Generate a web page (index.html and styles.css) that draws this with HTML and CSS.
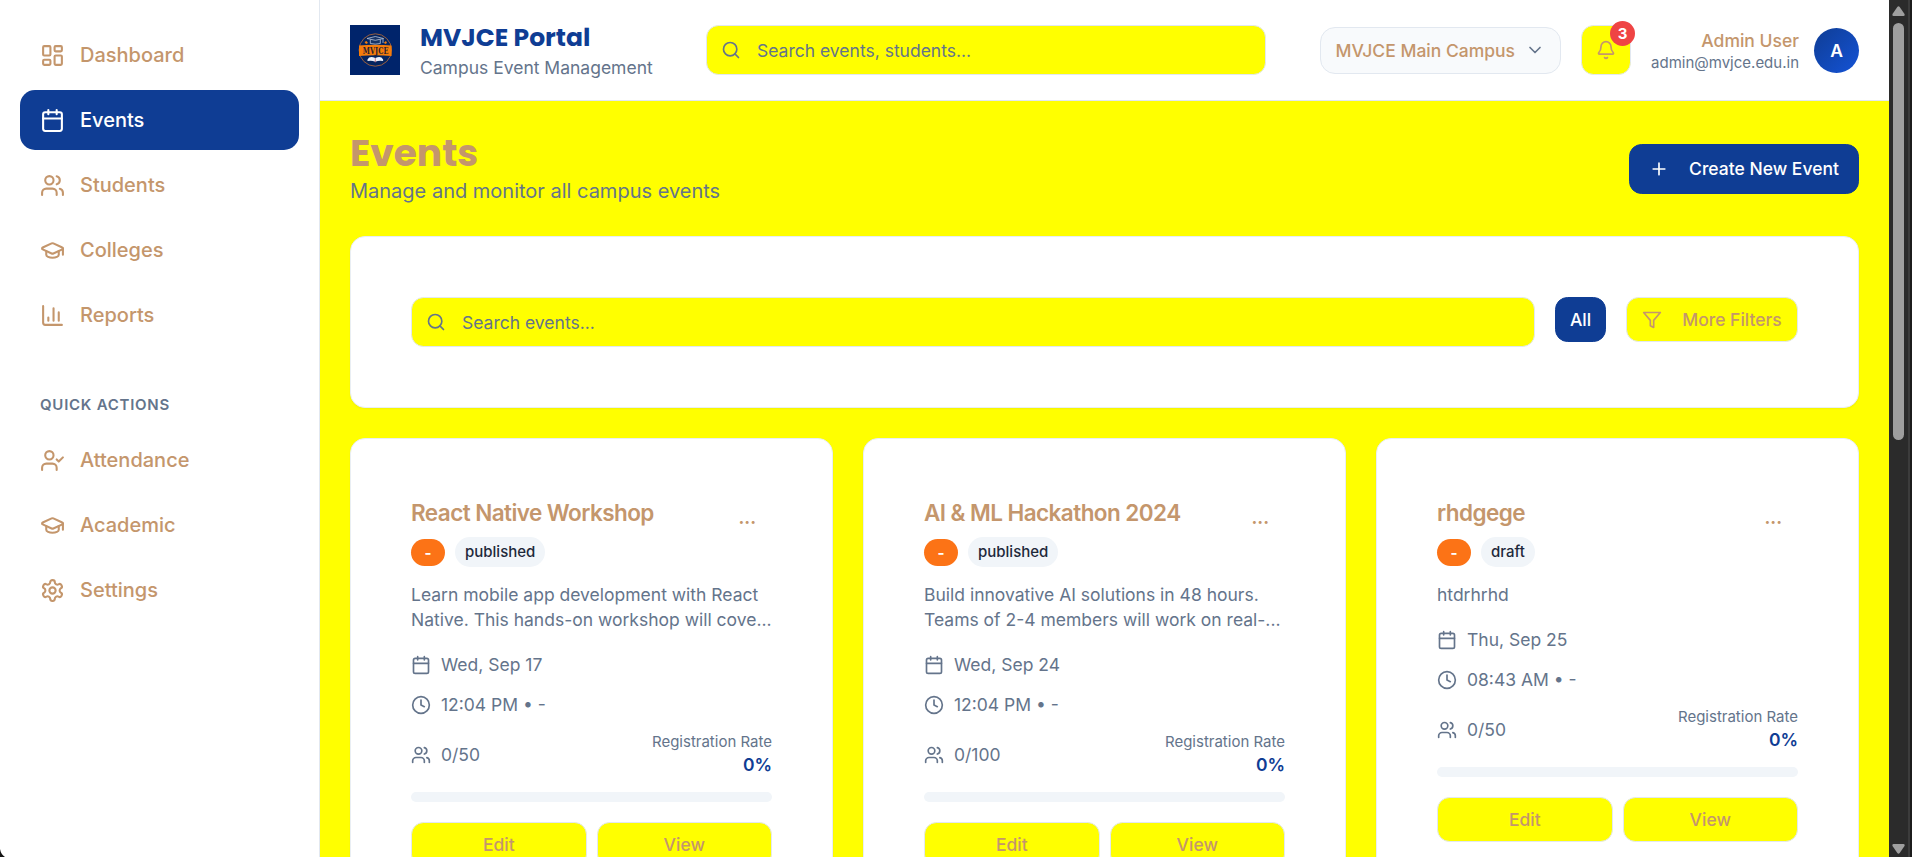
FILE: index.html
```html
<!DOCTYPE html>
<html lang="en">
<head>
<meta charset="utf-8">
<title>MVJCE Portal</title>
<link rel="stylesheet" href="styles.css">
</head>
<body>
<svg class="sprite" aria-hidden="true">
  <symbol id="dashboard" viewBox="0 0 24 24"><rect width="7" height="9" x="3" y="3" rx="1"/><rect width="7" height="5" x="14" y="3" rx="1"/><rect width="7" height="9" x="14" y="12" rx="1"/><rect width="7" height="5" x="3" y="16" rx="1"/></symbol>
  <symbol id="calendar" viewBox="0 0 24 24"><path d="M8 2v4M16 2v4"/><rect width="18" height="18" x="3" y="4" rx="2"/><path d="M3 10h18"/></symbol>
  <symbol id="users" viewBox="0 0 24 24"><path d="M16 21v-2a4 4 0 0 0-4-4H6a4 4 0 0 0-4 4v2"/><circle cx="9" cy="7" r="4"/><path d="M22 21v-2a4 4 0 0 0-3-3.87M16 3.13a4 4 0 0 1 0 7.75"/></symbol>
  <symbol id="cap" viewBox="0 0 24 24"><path d="M21.42 10.922a1 1 0 0 0-.019-1.838L12.83 5.18a2 2 0 0 0-1.66 0L2.6 9.08a1 1 0 0 0 0 1.832l8.57 3.908a2 2 0 0 0 1.66 0z"/><path d="M22 10v6M6 12.5V16a6 3 0 0 0 12 0v-3.5"/></symbol>
  <symbol id="chart" viewBox="0 0 24 24"><path d="M3 3v16a2 2 0 0 0 2 2h16M18 17V9M13 17V5M8 17v-3"/></symbol>
  <symbol id="user-check" viewBox="0 0 24 24"><path d="m16 11 2 2 4-4M16 21v-2a4 4 0 0 0-4-4H6a4 4 0 0 0-4 4v2"/><circle cx="9" cy="7" r="4"/></symbol>
  <symbol id="settings" viewBox="0 0 24 24"><path d="M12.22 2h-.44a2 2 0 0 0-2 2v.18a2 2 0 0 1-1 1.73l-.43.25a2 2 0 0 1-2 0l-.15-.08a2 2 0 0 0-2.73.73l-.22.38a2 2 0 0 0 .73 2.73l.15.1a2 2 0 0 1 1 1.72v.51a2 2 0 0 1-1 1.74l-.15.09a2 2 0 0 0-.73 2.73l.22.38a2 2 0 0 0 2.73.73l.15-.08a2 2 0 0 1 2 0l.43.25a2 2 0 0 1 1 1.73V20a2 2 0 0 0 2 2h.44a2 2 0 0 0 2-2v-.18a2 2 0 0 1 1-1.73l.43-.25a2 2 0 0 1 2 0l.15.08a2 2 0 0 0 2.73-.73l.22-.39a2 2 0 0 0-.73-2.73l-.15-.08a2 2 0 0 1-1-1.74v-.5a2 2 0 0 1 1-1.74l.15-.09a2 2 0 0 0 .73-2.73l-.22-.38a2 2 0 0 0-2.73-.73l-.15.08a2 2 0 0 1-2 0l-.43-.25a2 2 0 0 1-1-1.73V4a2 2 0 0 0-2-2z"/><circle cx="12" cy="12" r="3"/></symbol>
  <symbol id="search" viewBox="0 0 24 24"><circle cx="11" cy="11" r="8"/><path d="m21 21-4.3-4.3"/></symbol>
  <symbol id="chevron" viewBox="0 0 24 24"><path d="m6 9 6 6 6-6"/></symbol>
  <symbol id="bell" viewBox="0 0 24 24"><path d="M10.268 21a2 2 0 0 0 3.464 0M3.262 15.326A1 1 0 0 0 4 17h16a1 1 0 0 0 .74-1.673C19.41 13.956 18 12.499 18 8A6 6 0 0 0 6 8c0 4.499-1.411 5.956-2.738 7.326"/></symbol>
  <symbol id="plus" viewBox="0 0 24 24"><path d="M5 12h14M12 5v14"/></symbol>
  <symbol id="filter" viewBox="0 0 24 24"><path d="M22 3H2l8 9.46V19l4 2v-8.54z"/></symbol>
  <symbol id="clock" viewBox="0 0 24 24"><circle cx="12" cy="12" r="10"/><path d="M12 6v6l4 2"/></symbol>
</svg>

<div class="app">
  <aside class="sidebar">
    <nav class="nav">
      <a class="nav-item"><svg class="icon icon-lg"><use href="#dashboard"/></svg>Dashboard</a>
      <a class="nav-item active"><svg class="icon icon-lg"><use href="#calendar"/></svg>Events</a>
      <a class="nav-item"><svg class="icon icon-lg"><use href="#users"/></svg>Students</a>
      <a class="nav-item"><svg class="icon icon-lg"><use href="#cap"/></svg>Colleges</a>
      <a class="nav-item"><svg class="icon icon-lg"><use href="#chart"/></svg>Reports</a>
    </nav>
    <h3 class="nav-heading">QUICK ACTIONS</h3>
    <nav class="nav">
      <a class="nav-item"><svg class="icon icon-lg"><use href="#user-check"/></svg>Attendance</a>
      <a class="nav-item"><svg class="icon icon-lg"><use href="#cap"/></svg>Academic</a>
      <a class="nav-item"><svg class="icon icon-lg"><use href="#settings"/></svg>Settings</a>
    </nav>
    <svg class="window-corner" viewBox="0 0 5 8"><path d="M0 0Q1 5.500 5 8H0z"/></svg>
  </aside>

  <div class="content">
    <header class="header">
      <div class="brand">
        <svg class="logo" viewBox="0 0 50 50">
          <rect width="50" height="50" fill="#00246b"/>
          <circle cx="25.300" cy="25" r="16.200" fill="#04245f" stroke="#a8653c" stroke-width=".9"/>
          <path d="M9 20.500q16.300-1.500 32.600 0V31q-16.300-1.500-32.600 0z" fill="#f57c0b"/>
          <path d="M17 13.500l8.300-2 8.300 2-8.300 1.800zM20.300 14.500v4q5 1.300 10 0v-4M33 14v4" fill="#173468" stroke="#b9c6dc" stroke-width=".8"/>
          <path d="M14.500 17l2-1 1.500 2-2 1zM34 17.500l2-1.500 1 2-2 1z" fill="#f57c0b"/>
          <path d="M17.500 34.500q2-4 7.800-1.500 5.800-2.500 7.800 1.500v1.500q-4-1-7.800.7-3.800-1.700-7.800-.7z" fill="#eef2fa"/>
          <path d="M25.300 33v4.500" stroke="#c44a58" stroke-width=".7"/>
          <text x="25.600" y="28.600" text-anchor="middle" textLength="25.500" lengthAdjust="spacingAndGlyphs" class="logo-text">MVJCE</text>
        </svg>
        <div class="brand-text">
          <h1 class="brand-name">MVJCE Portal</h1>
          <p class="brand-sub">Campus Event Management</p>
        </div>
      </div>
      <div class="field header-search"><svg class="icon"><use href="#search"/></svg><span>Search events, students...</span></div>
      <div class="header-right">
        <div class="campus"><span>MVJCE Main Campus</span><svg class="icon"><use href="#chevron"/></svg></div>
        <button class="btn bell"><svg class="icon"><use href="#bell"/></svg><span class="badge">3</span></button>
        <div class="user">
          <div class="user-text"><p class="user-name">Admin User</p><p class="user-mail">admin@mvjce.edu.in</p></div>
          <div class="avatar">A</div>
        </div>
      </div>
    </header>

    <main class="main">
      <div class="page-head">
        <div>
          <h2 class="page-title">Events</h2>
          <p class="page-sub">Manage and monitor all campus events</p>
        </div>
        <button class="btn primary create"><svg class="icon"><use href="#plus"/></svg>Create New Event</button>
      </div>

      <section class="card filters">
        <div class="field filter-search"><svg class="icon"><use href="#search"/></svg><span>Search events...</span></div>
        <button class="btn primary all">All</button>
        <button class="btn more"><svg class="icon"><use href="#filter"/></svg>More Filters</button>
      </section>

      <section class="grid">
        <article class="card event">
          <div class="event-head"><h3 class="event-title">React Native Workshop</h3><span class="dots">...</span></div>
          <div class="tags"><span class="tag orange">-</span><span class="tag">published</span></div>
          <p class="desc">Learn mobile app development with React<br>Native. This hands-on workshop will cove...</p>
          <div class="meta first"><svg class="icon"><use href="#calendar"/></svg>Wed, Sep 17</div>
          <div class="meta"><svg class="icon"><use href="#clock"/></svg>12:04 PM • -</div>
          <div class="stats"><div class="meta-inline"><svg class="icon"><use href="#users"/></svg>0/50</div><div class="rate"><p class="rate-label">Registration Rate</p><p class="rate-value">0%</p></div></div>
          <div class="progress"></div>
          <div class="actions"><button class="btn">Edit</button><button class="btn">View</button></div>
        </article>
        <article class="card event">
          <div class="event-head"><h3 class="event-title">AI &amp; ML Hackathon 2024</h3><span class="dots">...</span></div>
          <div class="tags"><span class="tag orange">-</span><span class="tag">published</span></div>
          <p class="desc">Build innovative AI solutions in 48 hours.<br>Teams of 2-4 members will work on real-...</p>
          <div class="meta first"><svg class="icon"><use href="#calendar"/></svg>Wed, Sep 24</div>
          <div class="meta"><svg class="icon"><use href="#clock"/></svg>12:04 PM • -</div>
          <div class="stats"><div class="meta-inline"><svg class="icon"><use href="#users"/></svg>0/100</div><div class="rate"><p class="rate-label">Registration Rate</p><p class="rate-value">0%</p></div></div>
          <div class="progress"></div>
          <div class="actions"><button class="btn">Edit</button><button class="btn">View</button></div>
        </article>
        <article class="card event">
          <div class="event-head"><h3 class="event-title">rhdgege</h3><span class="dots">...</span></div>
          <div class="tags"><span class="tag orange">-</span><span class="tag">draft</span></div>
          <p class="desc">htdrhrhd</p>
          <div class="meta first"><svg class="icon"><use href="#calendar"/></svg>Thu, Sep 25</div>
          <div class="meta"><svg class="icon"><use href="#clock"/></svg>08:43 AM • -</div>
          <div class="stats"><div class="meta-inline"><svg class="icon"><use href="#users"/></svg>0/50</div><div class="rate"><p class="rate-label">Registration Rate</p><p class="rate-value">0%</p></div></div>
          <div class="progress"></div>
          <div class="actions"><button class="btn">Edit</button><button class="btn">View</button></div>
        </article>
      </section>
    </main>
  </div>

  <div class="scrollbar">
    <svg class="arrow" viewBox="0 0 13 10"><path d="M5.300 1Q6.500-.5 7.700 1L12.500 8Q13 10 11.500 10H1.500Q0 10 .5 8z"/></svg>
    <div class="thumb"></div>
    <svg class="arrow" viewBox="0 0 13 10"><path d="M5.300 9Q6.500 10.500 7.700 9L12.500 2Q13 0 11.500 0H1.500Q0 0 .5 2z"/></svg>
  </div>
</div>
</body>
</html>
```
FILE: styles.css
```css
:root {
  --tan: #c4966c;
  --blue: #0f3d94;
  --slate: #64748b;
  --line: #e2e8f0;
  --yellow: #ffff00;
}
* { box-sizing: border-box; margin: 0; padding: 0; }
body {
  height: 857px;
  overflow: hidden;
  font-family: Inter, "Liberation Sans", sans-serif;
  font-size: 17.5px;
  line-height: 25px;
  color: var(--slate);
  background: var(--yellow);
}
.sprite { display: none; }
.app { display: flex; height: 857px; }
.icon {
  width: 20px;
  height: 20px;
  flex: none;
  fill: none;
  stroke: currentColor;
  stroke-width: 2;
  stroke-linecap: round;
  stroke-linejoin: round;
}
.icon-lg { width: 25px; height: 25px; }

/* Sidebar */
.sidebar {
  position: relative;
  width: 320px;
  flex: none;
  padding: 25px 20px 0;
  background: #fff;
  border-right: 1px solid var(--line);
}
.nav { display: flex; flex-direction: column; gap: 5px; }
.nav-item {
  display: flex;
  align-items: center;
  gap: 15px;
  height: 60px;
  padding: 0 20px;
  border-radius: 15px;
  font-size: 20px;
  font-weight: 500;
  color: var(--tan);
}
.nav-item.active { background: var(--blue); color: #fff; }
.nav-heading {
  margin: 50px 0 15px;
  padding-left: 20px;
  font-size: 15px;
  font-weight: 600;
  line-height: 20px;
  letter-spacing: .75px;
}
.window-corner { position: absolute; left: 0; bottom: 0; width: 5px; height: 8px; fill: #151515; }

/* Header */
.content { flex: 1; min-width: 0; height: 857px; overflow: hidden; }
.header {
  display: flex;
  align-items: center;
  height: 101px;
  padding: 0 30px;
  background: #fff;
  border-bottom: 1px solid var(--line);
}
.brand { display: flex; align-items: center; gap: 20px; width: 356px; }
.logo { width: 50px; height: 50px; flex: none; }
.logo-text { font: 700 9px "DejaVu Serif", serif; fill: #2a1d2e; }
.brand-name {
  font-family: Poppins, Inter, sans-serif;
  font-size: 25px;
  font-weight: 700;
  line-height: 35px;
  color: var(--blue);
  white-space: nowrap;
}
.brand-sub { white-space: nowrap; }
.field {
  display: flex;
  align-items: center;
  gap: 16px;
  height: 50px;
  padding: 0 14px;
  background: var(--yellow);
  border: 1px solid var(--line);
  border-radius: 12.500px;
}
.header-search { width: 560px; flex: none; }
.header-right { display: flex; align-items: center; gap: 20px; margin-left: auto; }
.campus {
  display: flex;
  align-items: center;
  gap: 10px;
  height: 47px;
  padding: 0 15px;
  font-weight: 500;
  color: var(--tan);
  background: #f8fafc;
  border: 1px solid var(--line);
  border-radius: 15px;
}
.campus .icon { color: var(--slate); }
.btn {
  display: flex;
  align-items: center;
  justify-content: center;
  gap: 20px;
  height: 45px;
  font: 500 17.500px/25px Inter, "Liberation Sans", sans-serif;
  color: var(--tan);
  background: var(--yellow);
  border: 1px solid var(--line);
  border-radius: 12.500px;
}
.bell { position: relative; width: 50px; height: 50px; }
.badge {
  position: absolute;
  top: -5px;
  right: -5px;
  width: 25px;
  height: 25px;
  border-radius: 50%;
  background: #ef4444;
  color: #fff;
  font-size: 15px;
  font-weight: 700;
}
.user { display: flex; align-items: center; gap: 15px; text-align: right; }
.user-name { font-weight: 500; line-height: 25px; color: var(--tan); }
.user-mail { font-size: 15px; line-height: 20px; }
.avatar {
  width: 45px;
  height: 45px;
  border-radius: 50%;
  background: linear-gradient(135deg, #0f3d94, #1453d6);
  color: #fff;
  font-weight: 600;
  line-height: 45px;
  text-align: center;
}

/* Page */
.main { padding: 30px; }
.page-head { display: flex; align-items: center; justify-content: space-between; height: 75px; margin-bottom: 30px; }
.page-title {
  font-family: Poppins, Inter, sans-serif;
  font-size: 37.500px;
  font-weight: 700;
  line-height: 45px;
  color: var(--tan);
}
.page-sub { font-size: 20px; line-height: 30px; }
.primary { background: var(--blue); border-color: var(--blue); color: #fff; }
.create { width: 230px; height: 50px; white-space: nowrap; }
.card {
  background: #fff;
  border: 1px solid #e9eef3;
  border-radius: 15px;
  padding: 60px;
  box-shadow: 0 1px 2px rgba(0, 0, 0, .05);
}
.filters { display: flex; gap: 20px; height: 172px; margin-bottom: 30px; }
.filter-search { flex: 1; }
.all { width: 51px; }
.more { width: 172px; white-space: nowrap; }

/* Event cards */
.grid { display: grid; grid-template-columns: repeat(3, 1fr); gap: 30px; }
.event-head { display: flex; justify-content: space-between; height: 38px; }
.event-title {
  font-size: 22.500px;
  font-weight: 600;
  line-height: 28px;
  letter-spacing: -.5625px;
  color: var(--tan);
}
.dots { padding: 6px 16px 0 0; font-weight: 700; color: var(--tan); }
.tags { display: flex; align-items: center; gap: 10px; height: 30px; margin-bottom: 15px; }
.tag {
  height: 30px;
  padding: 0 10px;
  border-radius: 15px;
  background: #f1f5f9;
  color: #1e293b;
  font-size: 15px;
  font-weight: 500;
  line-height: 30px;
}
.tag.orange { width: 34px; height: 27px; line-height: 27px; padding: 0; text-align: center; background: #fc7316; color: #fff; font-weight: 700; }
.meta, .meta-inline { display: flex; align-items: center; gap: 10px; }
.meta { margin-top: 15px; }
.meta.first { margin-top: 20px; }
.stats { display: flex; align-items: center; justify-content: space-between; margin: 15px 0; }
.rate { text-align: right; }
.rate-label { font-size: 15px; line-height: 20px; }
.rate-value { font-weight: 600; color: var(--blue); }
.progress { height: 10px; margin-bottom: 20px; border-radius: 5px; background: #f1f5f9; }
.actions { display: grid; grid-template-columns: 1fr 1fr; gap: 10px; }

/* Scrollbar */
.scrollbar {
  display: flex;
  flex-direction: column;
  align-items: center;
  width: 23px;
  flex: none;
  padding: 6px 4px 3px 0;
  background: linear-gradient(90deg, #2b2b2b 19px, #3c3c3c 19px 21px, #1c1c1c 21px);
}
.arrow { width: 13px; height: 10px; flex: none; fill: #9f9f9f; }
.thumb { width: 11px; height: 417px; margin: 7px 0 auto; border-radius: 6px; background: #9f9f9f; }
```
